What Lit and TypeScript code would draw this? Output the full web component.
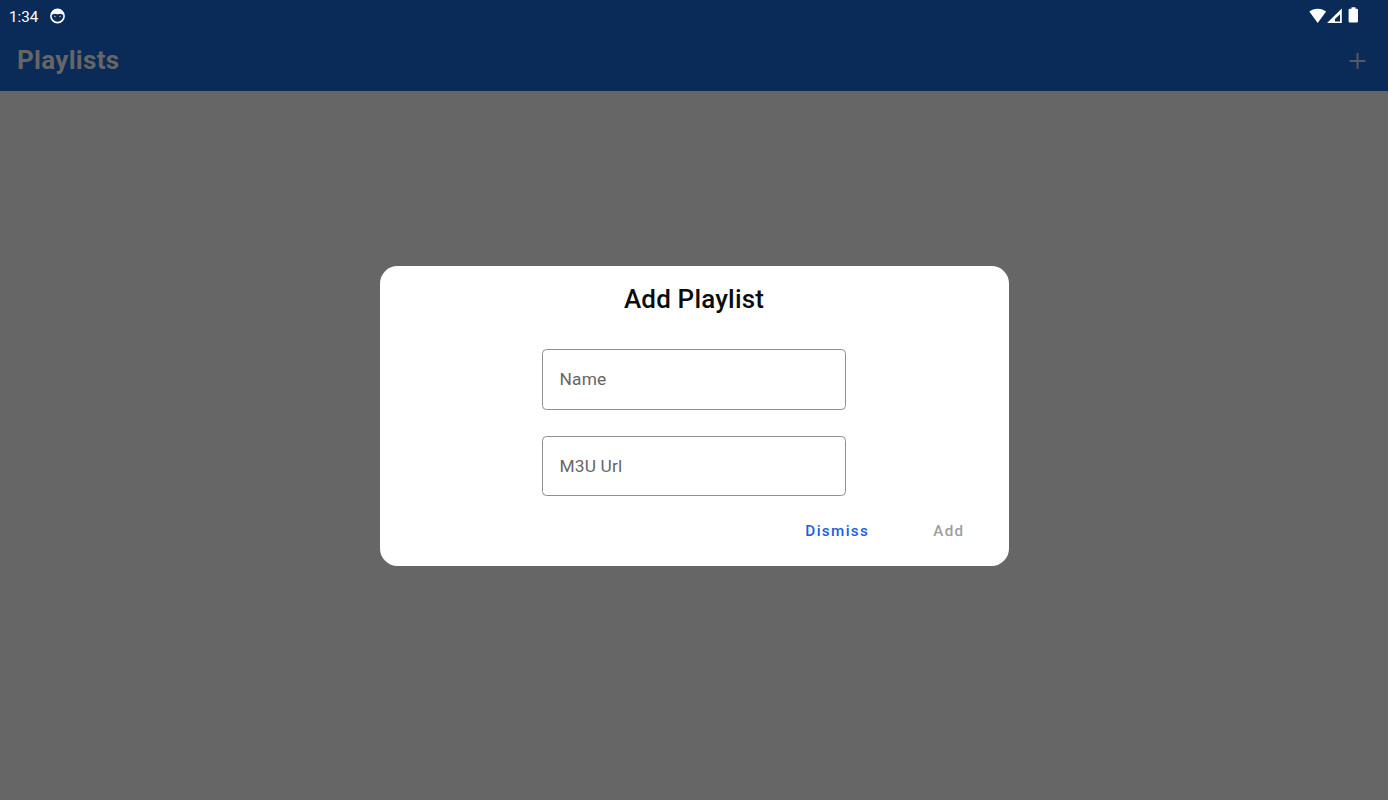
import { LitElement, html, css } from 'lit';
import { customElement, property } from 'lit/decorators.js';

@customElement('status-bar')
class StatusBar extends LitElement {

  static styles = css`
    :host {
      display: flex;
      align-items: center;
      justify-content: space-between;
      box-sizing: border-box;
      height: 32px;
      padding: 0 30px 0 9px;
      color: #fff;
      font-size: 15.2px;
    }

    .left, .right {
      display: flex;
      align-items: center;
    }

    .left {
      gap: 12px;
    }

    .clock {
      padding-top: 1px;
    }

    .right {
      margin-top: -2px;
    }

    svg {
      display: block;
    }
  `;

  render () {
    return html`
      <div class="left">
        <span class="clock">1:34</span>
        <svg width="15" height="16" viewBox="0 0 15 16">
          <circle cx="7.5" cy="8" r="6.6" fill="none" stroke="#fff" stroke-width="1.6"/>
          <path d="M1.5 6.2C2.3 2.8 4.8 1.2 7.5 1.2s5.2 1.6 6 5l-1.3.6-1-1.1-3.7.6-3.7-.6-1 1.1z" fill="#fff"/>
          <path d="M4 8l1.7.8M11 8l-1.7.8" stroke="#b9c3d3" stroke-width="1"/>
        </svg>
      </div>
      <div class="right">
        <svg width="49" height="18" viewBox="0 0 49 18">
          <path d="M.3 5.6C2.5 3.900 5.300 2.700 8.700 2.700s6.200 1.200 8.400 2.900L8.700 16.900z" fill="#fff"/>
          <path d="M18 17L32.800 2.500V17zM26 15.500h5V8.300l-5 4.700z" fill="#fff" fill-rule="evenodd"/>
          <path d="M42.500 1.200h4v1.500h1.300q1.200 0 1.200 1.200v11.400q0 1.200-1.200 1.200h-7q-1.200 0-1.200-1.200V3.900q0-1.200 1.200-1.200h1.700z" fill="#fff"/>
        </svg>
      </div>
    `;
  }
}

@customElement('outlined-field')
class OutlinedField extends LitElement {

  @property() label = '';

  static styles = css`
    :host {
      display: flex;
      align-items: center;
      box-sizing: border-box;
      width: 304px;
      height: 60.5px;
      padding: 0 16.5px 1px;
      border: 1px solid #8f8f8f;
      border-radius: 4.5px;
      color: #666;
      font-size: 17.35px;
      line-height: 20px;
      letter-spacing: 0.16px;
    }
  `;

  render () {
    return html`<span>${this.label}</span>`;
  }
}

@customElement('app-root')
class AppRoot extends LitElement {

  static styles = css`
    :host {
      display: block;
      position: relative;
      height: 100vh;
      overflow: hidden;
      background: #666;
      font-family: Roboto, sans-serif;
    }

    .header {
      height: 91px;
      background: #0a2b58;
    }

    .toolbar {
      display: flex;
      align-items: center;
      justify-content: space-between;
      height: 57px;
      padding: 0 22px 0 17px;
      color: #666;
    }

    .heading {
      padding-bottom: 1px;
      font-size: 26px;
      font-weight: 700;
      line-height: 30px;
      letter-spacing: 0.3px;
    }

    .overlay {
      position: absolute;
      inset: 32px 0 0;
      display: flex;
      align-items: center;
      justify-content: center;
    }

    .dialog {
      display: flex;
      flex-direction: column;
      align-items: center;
      box-sizing: border-box;
      width: 629px;
      height: 299.5px;
      padding-top: 17px;
      border-radius: 17.5px;
      background: #fff;
    }

    .title {
      height: 32px;
      margin-bottom: 34px;
      color: #0c0c0c;
      font-size: 26px;
      font-weight: 500;
      line-height: 32px;
      letter-spacing: 0.17px;
    }

    .fields {
      display: flex;
      flex-direction: column;
      gap: 26px;
    }

    .actions {
      display: flex;
      align-self: flex-end;
      gap: 64px;
      margin: 25px 44px 0 0;
      font-size: 15.2px;
      font-weight: 500;
      line-height: 20px;
      letter-spacing: 1.36px;
    }

    .dismiss {
      color: #1b5fdf;
    }

    .add {
      color: #9e9e9e;
    }
  `;

  render () {
    return html`
      <div class="header">
        <status-bar></status-bar>
        <div class="toolbar">
          <span class="heading">Playlists</span>
          <svg width="17" height="17" viewBox="0 0 17 17">
            <path d="M8.5 1v15.8M.6 8.9h15.8" stroke="#535a63" stroke-width="2"/>
          </svg>
        </div>
      </div>
      <div class="overlay">
        <div class="dialog">
          <div class="title">Add Playlist</div>
          <div class="fields">
            <outlined-field label="Name"></outlined-field>
            <outlined-field label="M3U Url"></outlined-field>
          </div>
          <div class="actions">
            <span class="dismiss">Dismiss</span>
            <span class="add">Add</span>
          </div>
        </div>
      </div>
    `;
  }
}
